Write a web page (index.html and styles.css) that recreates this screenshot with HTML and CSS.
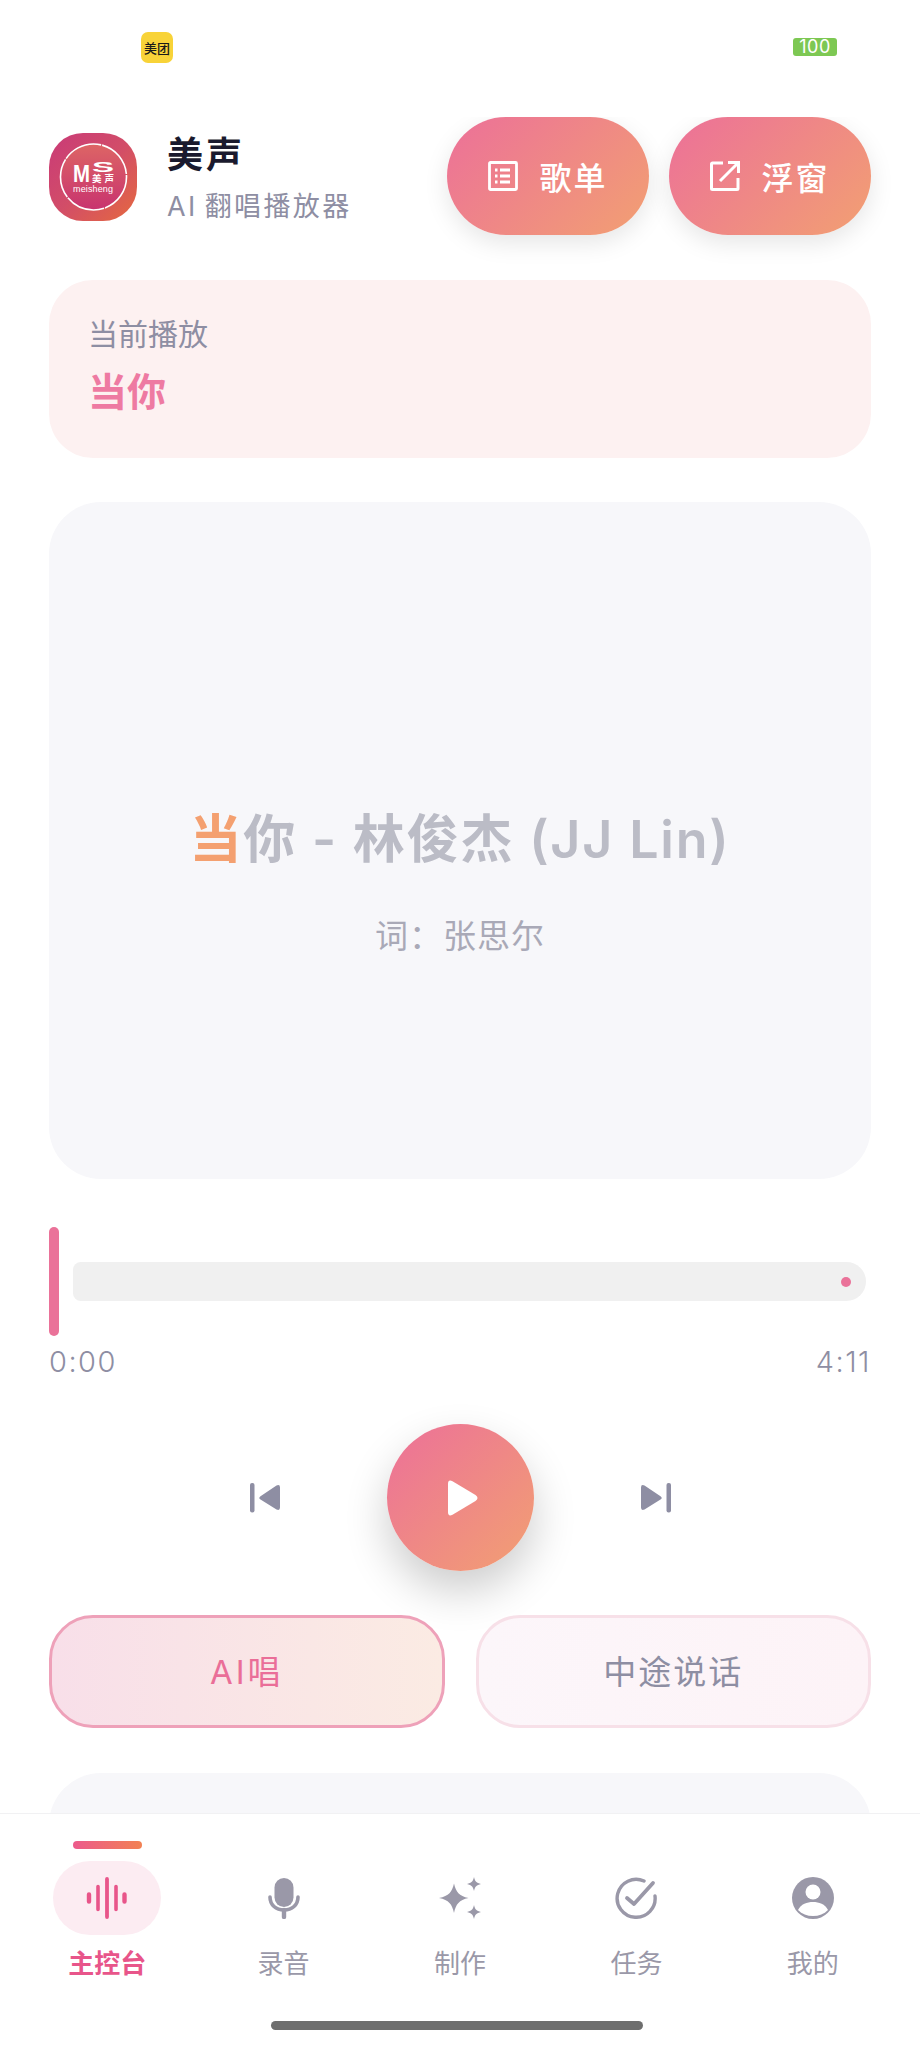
FILE: index.html
```html
<!DOCTYPE html>
<html lang="zh-CN">
<head>
<meta charset="UTF-8">
<meta name="viewport" content="width=device-width, initial-scale=1.0">
<title>美声</title>
<link rel="stylesheet" href="styles.css">
</head>
<body>
<div class="app">
    <div class="status-bar">
        <div class="status-app">
            <span class="status-app-text">美团</span>
        </div>
        <div class="battery">100</div>
    </div>

    <main class="content">
        <header class="header">
            <div class="brand">
                <svg class="logo" viewBox="0 0 88 88">
                    <defs>
                        <linearGradient id="logoBg" x1="0" y1="0" x2="1" y2="1">
                            <stop offset="0" stop-color="#c93a78"/>
                            <stop offset="0.5" stop-color="#d24d68"/>
                            <stop offset="1" stop-color="#e5693f"/>
                        </linearGradient>
                        <linearGradient id="logoInner" x1="0" y1="0" x2="0" y2="1">
                            <stop offset="0" stop-color="#dd6565"/>
                            <stop offset="1" stop-color="#c8336f"/>
                        </linearGradient>
                    </defs>
                    <rect width="88" height="88" rx="34" fill="url(#logoBg)"/>
                    <circle cx="44.500" cy="44" r="33" fill="url(#logoInner)" stroke="#fff" stroke-width="1.600" stroke-dasharray="40 1"/>
                    <text class="logo-m" x="24" y="48.500" textLength="17" lengthAdjust="spacingAndGlyphs">M</text>
                    <text class="logo-s" x="43" y="38.500" textLength="22" lengthAdjust="spacingAndGlyphs">S</text>
                    <text class="logo-cn" x="43" y="49" textLength="22">美声</text>
                    <text class="logo-en" x="24" y="59" textLength="40">meisheng</text>
                </svg>
                <div class="brand-text">
                    <div class="brand-name">美声</div>
                    <div class="brand-sub">AI 翻唱播放器</div>
                </div>
            </div>
            <div class="header-actions">
                <div class="pill-btn">
                    <svg class="pill-icon" viewBox="0 0 30 30" fill="none" stroke="#fff" stroke-width="2.800">
                        <rect x="1.500" y="1.500" width="27" height="27" rx="1"/>
                        <path d="M12 9h10M12 15h10M12 21h10"/>
                        <path d="M7 9h2.500M7 15h2.500M7 21h2.500"/>
                    </svg>
                    <span>歌单</span>
                </div>
                <div class="pill-btn">
                    <svg class="pill-icon" viewBox="0 0 30 30" fill="none" stroke="#fff" stroke-width="3">
                        <path d="M13 2H2.500a1 1 0 0 0-1 1v24.500a1 1 0 0 0 1 1H27a1 1 0 0 0 1-1V17"/>
                        <path d="M10 20L28 2M18 1.500h10.500V12"/>
                    </svg>
                    <span>浮窗</span>
                </div>
            </div>
        </header>

        <section class="now-playing">
            <div class="now-label">当前播放</div>
            <div class="now-title">当你</div>
        </section>

        <section class="lyrics">
            <div class="lyrics-title"><span class="lyrics-active">当</span>你 - 林俊杰 (JJ Lin)</div>
            <div class="lyrics-next">词：张思尔</div>
        </section>

        <section class="progress">
            <div class="progress-row">
                <div class="progress-handle"></div>
                <div class="progress-track">
                    <div class="progress-dot"></div>
                </div>
            </div>
            <div class="progress-times">
                <span>0:00</span>
                <span>4:11</span>
            </div>
        </section>

        <section class="controls">
            <svg class="skip-icon" viewBox="0 0 30 30" fill="#8e8ea3">
                <rect x="0" y="0" width="4.500" height="29.500" rx="2"/>
                <path d="M10.500 13.200L26.500 2.500Q30 1 30 4.500V24.500Q30 28 26.500 26.500L10.500 16.500Q8 15 10.500 13.200Z"/>
            </svg>
            <div class="play-btn">
                <svg class="play-icon" viewBox="0 0 30 36" fill="#fff">
                    <path d="M0 4Q0 -1 4.500 1.200L27.500 15Q31.500 18 27.500 21L4.500 34.800Q0 37 0 32Z"/>
                </svg>
            </div>
            <svg class="skip-icon" viewBox="0 0 30 30" fill="#8e8ea3">
                <path d="M19.500 13.200L3.500 2.500Q0 1 0 4.500V24.500Q0 28 3.500 26.500L19.500 16.500Q22 15 19.500 13.200Z"/>
                <rect x="25.500" y="0" width="4.500" height="29.500" rx="2"/>
            </svg>
        </section>

        <section class="modes">
            <div class="mode-btn mode-on">AI唱</div>
            <div class="mode-btn mode-off">中途说话</div>
        </section>

        <section class="next-card"></section>
    </main>

    <nav class="tabbar">
        <div class="tab tab-active">
            <div class="tab-line"></div>
            <div class="tab-icon-wrap">
                <svg class="tab-icon" viewBox="0 0 42 42" fill="none" stroke="#e8558a" stroke-linecap="round">
                    <path d="M3 17.500v7M38.500 17.500v7" stroke-width="4.400"/>
                    <path d="M12 9.500v23M30 9.500v23" stroke-width="3.600"/>
                    <path d="M21 2v38" stroke-width="3.800"/>
                </svg>
            </div>
            <div class="tab-label">主控台</div>
        </div>
        <div class="tab">
            <div class="tab-line tab-line-empty"></div>
            <div class="tab-icon-wrap">
                <svg class="tab-icon" viewBox="0 0 42 42">
                    <rect x="11.500" y="1" width="19" height="29" rx="9.500" fill="#9a98a8"/>
                    <path d="M7 20c0 8 6 13 14 13s14-5 14-13" fill="none" stroke="#9a98a8" stroke-width="3.600" stroke-linecap="round"/>
                    <path d="M21 33v7" stroke="#9a98a8" stroke-width="4.400" stroke-linecap="round"/>
                </svg>
            </div>
            <div class="tab-label">录音</div>
        </div>
        <div class="tab">
            <div class="tab-line tab-line-empty"></div>
            <div class="tab-icon-wrap">
                <svg class="tab-icon" viewBox="0 0 42 42" fill="#9a98a8">
                    <path d="M15 6.500C17 15 20 19 29.500 21C20 23 17 27 15 36C13 27 10 23 0 21C10 19 13 15 15 6.500Z"/>
                    <path d="M35 0C36 4.500 37.500 6 42 7C37.500 8 36 9.500 35 14C34 9.500 32.500 8 28 7C32.500 6 34 4.500 35 0Z"/>
                    <path d="M35 28C36 32.500 37.500 34 42 35C37.500 36 36 37.500 35 42C34 37.500 32.500 36 28 35C32.500 34 34 32.500 35 28Z"/>
                </svg>
            </div>
            <div class="tab-label">制作</div>
        </div>
        <div class="tab">
            <div class="tab-line tab-line-empty"></div>
            <div class="tab-icon-wrap">
                <svg class="tab-icon" viewBox="0 0 42 42" fill="none" stroke="#9a98a8" stroke-linecap="round" stroke-linejoin="round">
                    <path d="M40 19A19 19 0 1 1 29 4" stroke-width="3.400"/>
                    <path d="M12 21l7 6L38 6" stroke-width="3.800"/>
                </svg>
            </div>
            <div class="tab-label">任务</div>
        </div>
        <div class="tab">
            <div class="tab-line tab-line-empty"></div>
            <div class="tab-icon-wrap">
                <svg class="tab-icon" viewBox="0 0 42 42">
                    <circle cx="21" cy="21" r="21" fill="#9a98a8"/>
                    <circle cx="21" cy="15" r="7.500" fill="#fff"/>
                    <path d="M6 33c3-6 9-8 15-8s12 2 15 8c-4 4-9 6-15 6s-11-2-15-6Z" fill="#fff"/>
                </svg>
            </div>
            <div class="tab-label">我的</div>
        </div>
    </nav>

    <div class="home-area">
        <div class="home-bar"></div>
    </div>
</div>
</body>
</html>
```
FILE: styles.css
```css
* {
    box-sizing: border-box;
}

body {
    margin: 0;
    padding: 0;
    background-color: #fff;
    font-family: Inter, "Noto Sans CJK SC", sans-serif;
}

.app {
    width: 920px;
    height: 2045px;
    display: flex;
    flex-direction: column;
    overflow: hidden;
    background-color: #fff;
}

/* status bar */
.status-bar {
    height: 117px;
    flex-shrink: 0;
    display: flex;
    justify-content: space-between;
    align-items: flex-start;
    padding: 32px 83px 0 141px;
}

.status-app {
    width: 32px;
    height: 31px;
    border-radius: 7px;
    background-color: #f8d338;
    display: flex;
    align-items: center;
    justify-content: center;
}

.status-app-text {
    font-size: 13px;
    font-weight: 500;
    color: #1a1a1a;
    white-space: nowrap;
}

.battery {
    width: 44px;
    height: 18px;
    margin-top: 6px;
    border-radius: 3px;
    background-color: #7dc853;
    color: #fff;
    font-size: 18px;
    line-height: 18px;
    text-align: center;
    letter-spacing: 0.5px;
}

/* main column */
.content {
    flex: 1;
    min-height: 0;
    overflow: hidden;
    padding: 0 49px;
}

.header {
    height: 118px;
    display: flex;
    justify-content: space-between;
    align-items: center;
}

.brand {
    display: flex;
    align-items: center;
    gap: 30px;
    margin-top: 2px;
}

.logo {
    width: 88px;
    height: 88px;
    display: block;
}

.logo-m {
    font-family: "Liberation Sans", sans-serif;
    font-size: 24px;
    font-weight: 700;
    fill: #fff;
}

.logo-s {
    font-family: "Liberation Sans", sans-serif;
    font-size: 14px;
    font-weight: 700;
    fill: #fff;
}

.logo-cn {
    font-family: "Noto Sans CJK SC", sans-serif;
    font-size: 9.500px;
    font-weight: 700;
    fill: #fff;
}

.logo-en {
    font-family: "Liberation Sans", sans-serif;
    font-size: 9px;
    fill: #fff;
}

.brand-text {
    padding-top: 3px;
}

.brand-name {
    font-size: 36px;
    line-height: 44px;
    font-weight: 700;
    letter-spacing: 3px;
    color: #1a1a2e;
}

.brand-sub {
    margin-top: 13px;
    font-size: 27px;
    line-height: 34px;
    letter-spacing: 2.400px;
    word-spacing: -3px;
    color: #8e8ea3;
    white-space: nowrap;
}

.header-actions {
    display: flex;
    gap: 20px;
}

.pill-btn {
    width: 202px;
    height: 118px;
    border-radius: 59px;
    background: linear-gradient(135deg, #ec7099, #f2a072);
    box-shadow: 0 8px 24px rgba(0, 0, 0, 0.1);
    display: flex;
    align-items: center;
    justify-content: center;
    gap: 21px;
    color: #fff;
    font-size: 32px;
    font-weight: 500;
    letter-spacing: 2px;
}

.pill-icon {
    width: 30px;
    height: 30px;
    flex-shrink: 0;
}

.now-playing {
    height: 178px;
    margin-top: 45px;
    padding: 34px 39px 0;
    border-radius: 44px;
    background-color: #fdf1f1;
}

.now-label {
    font-size: 30px;
    line-height: 40px;
    color: #8e8ea3;
}

.now-title {
    margin-top: 13px;
    font-size: 39px;
    line-height: 50px;
    font-weight: 700;
    color: #ee7aa2;
}

.lyrics {
    height: 677px;
    margin-top: 44px;
    border-radius: 52px;
    background-color: #f7f7fa;
    display: flex;
    flex-direction: column;
    align-items: center;
    padding-top: 306px;
}

.lyrics-title {
    font-size: 52px;
    line-height: 64px;
    font-weight: 600;
    letter-spacing: 1.800px;
    color: #bbbcc6;
    white-space: nowrap;
}

.lyrics-active {
    color: #f4a070;
}

.lyrics-next {
    margin-top: 42px;
    font-size: 33px;
    line-height: 44px;
    letter-spacing: 1px;
    color: #a9a9b7;
}

.progress {
    margin-top: 48px;
}

.progress-row {
    height: 109px;
    display: flex;
    align-items: center;
    gap: 14px;
}

.progress-handle {
    width: 10px;
    height: 109px;
    border-radius: 5px;
    background-color: #ea7299;
}

.progress-track {
    width: 793px;
    height: 39px;
    border-radius: 8px 20px 20px 8px;
    background-color: #f0f0f0;
    display: flex;
    align-items: center;
    justify-content: flex-end;
    padding-right: 15px;
}

.progress-dot {
    width: 10px;
    height: 10px;
    border-radius: 50%;
    background-color: #ea7299;
}

.progress-times {
    margin-top: 7px;
    display: flex;
    justify-content: space-between;
    font-size: 29px;
    line-height: 38px;
    font-weight: 300;
    letter-spacing: 1.500px;
    color: #8e8ea3;
}

.controls {
    margin-top: 43px;
    display: flex;
    justify-content: center;
    align-items: center;
    gap: 107px;
}

.skip-icon {
    width: 30px;
    height: 30px;
    flex-shrink: 0;
}

.play-btn {
    width: 147px;
    height: 147px;
    border-radius: 50%;
    background: linear-gradient(135deg, #ec7099, #f2a072);
    box-shadow: 0 20px 44px rgba(0, 0, 0, 0.2);
    display: flex;
    align-items: center;
    justify-content: center;
    padding-left: 6px;
}

.play-icon {
    width: 30px;
    height: 36px;
}

.modes {
    margin-top: 44px;
    display: flex;
    gap: 31px;
}

.mode-btn {
    flex: 1;
    height: 113px;
    padding-bottom: 3px;
    border-radius: 44px;
    border: 3px solid #f7e0e8;
    display: flex;
    align-items: center;
    justify-content: center;
    font-size: 33px;
    letter-spacing: 2px;
    color: #8e8ea3;
}

.mode-on {
    border-color: #eea1b9;
    background: linear-gradient(90deg, #f8dfe9, #fbebe3);
    color: #ea6e98;
    letter-spacing: 3px;
}

.mode-off {
    background: linear-gradient(90deg, #fcf6fa, #fdf3f7);
}

.next-card {
    height: 200px;
    margin-top: 45px;
    border-radius: 52px;
    background-color: #f7f7fa;
}

/* bottom nav */
.tabbar {
    height: 190px;
    flex-shrink: 0;
    padding: 0 19px;
    display: flex;
    background-color: #fff;
    border-top: 1px solid #f1f1f3;
}

.tab {
    flex: 1;
    display: flex;
    flex-direction: column;
    align-items: center;
}

.tab-line {
    width: 69px;
    height: 8px;
    margin-top: 27px;
    border-radius: 4px;
    background: linear-gradient(90deg, #ec5a8c, #f28253);
}

.tab-line-empty {
    background: none;
}

.tab-icon-wrap {
    width: 108px;
    height: 74px;
    margin-top: 12px;
    border-radius: 37px;
    display: flex;
    align-items: center;
    justify-content: center;
}

.tab-active .tab-icon-wrap {
    background-color: #fcecf2;
}

.tab-icon {
    width: 42px;
    height: 42px;
}

.tab-label {
    margin-top: 11px;
    font-size: 26px;
    line-height: 36px;
    color: #9a98a8;
    white-space: nowrap;
}

.tab-active .tab-label {
    font-weight: 700;
    color: #e8558a;
}

.home-area {
    height: 42px;
    flex-shrink: 0;
    display: flex;
    justify-content: center;
    padding: 18px 6px 0 0;
    background-color: #fff;
}

.home-bar {
    width: 372px;
    height: 9px;
    border-radius: 5px;
    background-color: #6e6e6e;
}
```
